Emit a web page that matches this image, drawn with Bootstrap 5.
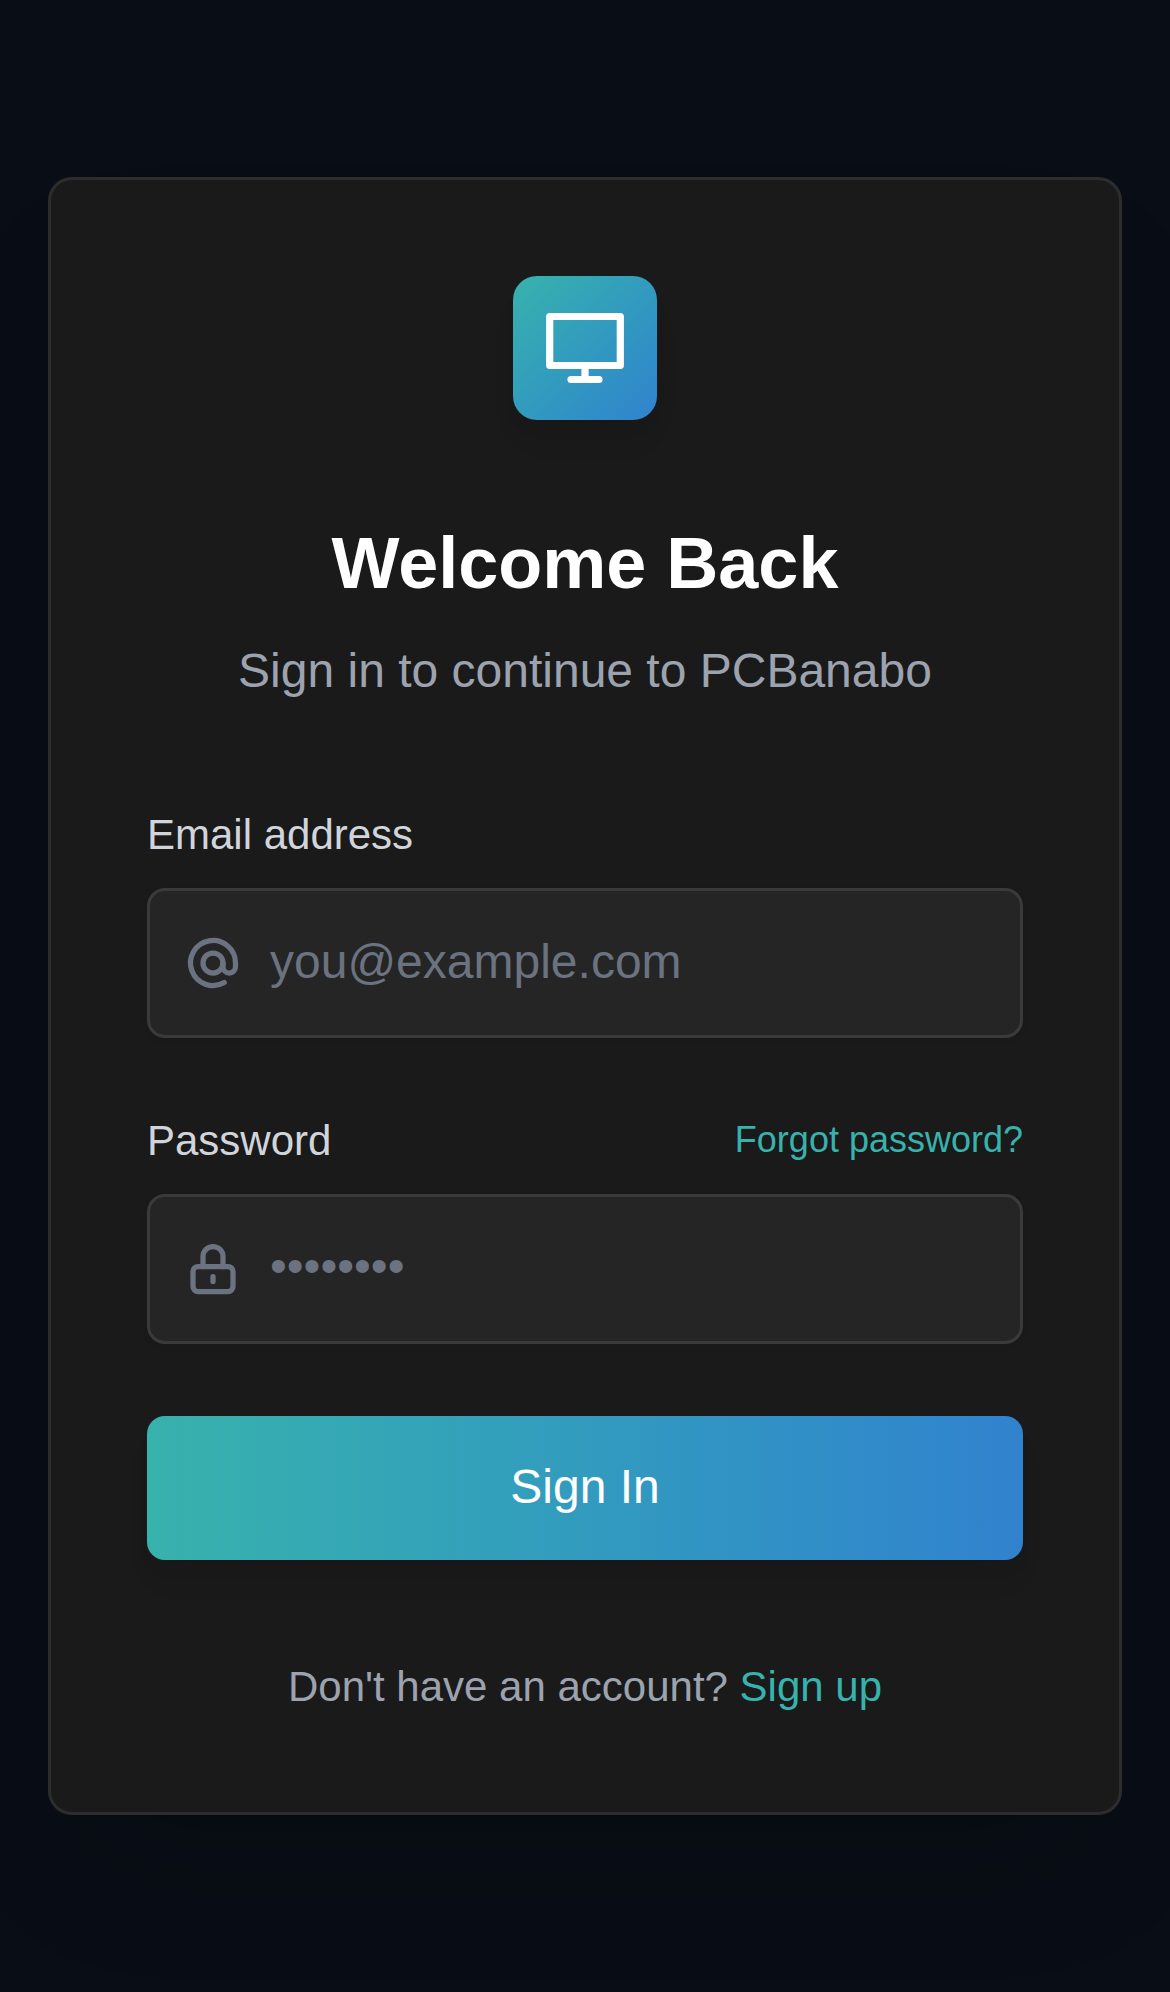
<!DOCTYPE html>
<html lang="en">
<head>
<meta charset="utf-8">
<meta name="viewport" content="width=device-width, initial-scale=1">
<title>Sign in</title>
<link href="https://cdn.jsdelivr.net/npm/bootstrap@5.3.0/dist/css/bootstrap.min.css" rel="stylesheet">
<style>
  body { background: #090e16; font-family: "Liberation Sans", Arial, sans-serif; color: #fff; }
  .login-page { min-height: 1992px; padding: 0 48px; }
  .login-card { --bs-card-bg: #1a1a1a; height: 1638px; border: 3px solid #2d2d2d; border-radius: 24px; padding: 96px; box-shadow: 0 75px 120px -36px rgba(0,0,0,.18); color: #fff; }
  .brand-tile { width: 144px; height: 144px; border-radius: 24px; background: linear-gradient(135deg in oklab, #38b2ac, #3182ce); box-shadow: 0 24px 36px -9px rgba(0,0,0,.06), 0 12px 18px -6px rgba(0,0,0,.06); margin-bottom: 95px; }
  .login-title { font-size: 72px; line-height: 96px; font-weight: 700; margin-bottom: 24px; }
  .login-sub { font-size: 48px; line-height: 72px; color: #9ca3af; margin-bottom: 98px; }
  .field-label { font-size: 42px; line-height: 60px; color: #d1d5db; margin-bottom: 23px; }
  .field-box { height: 150px; border: 3px solid #3a3a3a; border-radius: 18px; background: #252525; padding-left: 33px; color: #6b7280; box-shadow: 0 3px 6px rgba(0,0,0,.05); }
  .field-box svg { flex: none; }
  .field-input, .field-input:focus { background: transparent; border: 0; box-shadow: none; font-size: 48px; line-height: 72px; padding: 0 0 2px 27px; color: #fff; }
  .field-input[type=password] { padding-bottom: 6px; }
  .field-input::placeholder { color: #6b7280; opacity: 1; }
  .password-head { margin-top: 73px; }
  .teal-link { color: #38b2ac; text-decoration: none; }
  .forgot { font-size: 36px; line-height: 58px; }
  .btn-signin { height: 144px; border: 0; border-radius: 18px; font-size: 48px; line-height: 72px; margin-top: 72px; padding-bottom: 8px; color: #fff; background: linear-gradient(90deg in oklab, #38b2ac, #3182ce); box-shadow: 0 24px 36px -9px rgba(0,0,0,.06), 0 12px 18px -6px rgba(0,0,0,.06); }
  .signup-line { font-size: 42px; line-height: 60px; color: #9ca3af; margin-top: 97px; }
</style>
<script src="https://cdn.jsdelivr.net/npm/bootstrap@5.3.0/dist/js/bootstrap.bundle.min.js" defer></script>
</head>
<body>
<main class="login-page d-flex align-items-center">
  <section class="card login-card w-100">
    <div class="brand-tile d-flex mx-auto">
      <svg width="144" height="144" viewBox="0 0 144 144" fill="none" stroke="#fff" stroke-width="7.200" stroke-linecap="round" stroke-linejoin="round" aria-hidden="true">
        <rect x="36.700" y="40.500" width="70.600" height="49"/>
        <path d="M72 90v10M58 103.500h28"/>
      </svg>
    </div>
    <h1 class="login-title text-center">Welcome Back</h1>
    <p class="login-sub text-center">Sign in to continue to PCBanabo</p>
    <form class="d-flex flex-column">
      <label class="field-label" for="email">Email address</label>
      <div class="field-box d-flex align-items-center">
        <svg width="60" height="60" viewBox="0 0 24 24" fill="none" stroke="currentColor" stroke-width="2.100" stroke-linecap="round" aria-hidden="true">
          <circle cx="12" cy="12" r="4"/>
          <path d="M16 12v1.500a2.500 2.500 0 0 0 5 0V12a9 9 0 1 0-4.500 7.800"/>
        </svg>
        <input class="form-control field-input" id="email" type="email" placeholder="you@example.com">
      </div>
      <div class="password-head d-flex justify-content-between align-items-start">
        <label class="field-label" for="password">Password</label>
        <a class="teal-link forgot" href="#">Forgot password?</a>
      </div>
      <div class="field-box d-flex align-items-center">
        <svg width="60" height="60" viewBox="0 0 24 24" fill="none" stroke="currentColor" stroke-width="2.100" stroke-linecap="round" aria-hidden="true">
          <rect x="4" y="11" width="16" height="10" rx="2"/>
          <path d="M8 11V7a4 4 0 0 1 8 0v4M12 15v2"/>
        </svg>
        <input class="form-control field-input" id="password" type="password" placeholder="••••••••">
      </div>
      <button class="btn btn-signin w-100" type="button">Sign In</button>
    </form>
    <p class="signup-line text-center mb-0">Don't have an account? <a class="teal-link" href="#">Sign up</a></p>
  </section>
</main>
</body>
</html>
